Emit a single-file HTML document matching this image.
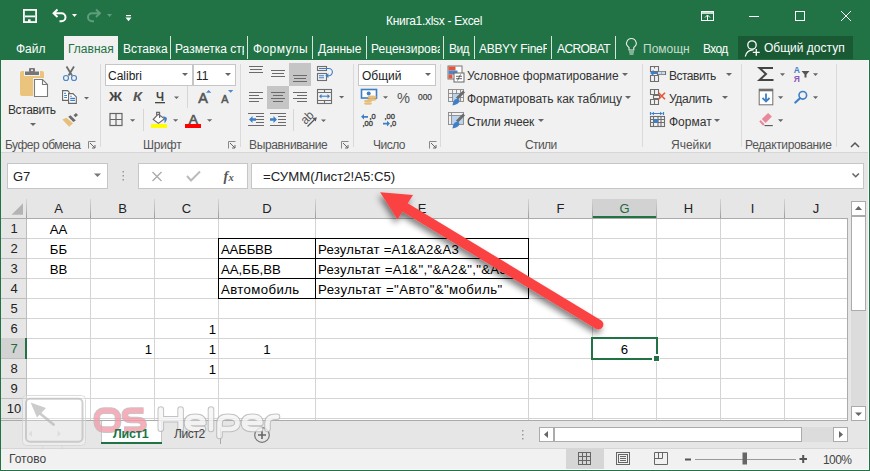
<!DOCTYPE html>
<html><head><meta charset="utf-8">
<style>
*{margin:0;padding:0;box-sizing:border-box}
html,body{width:870px;height:471px;overflow:hidden}
body{position:relative;background:#217346;font-family:"Liberation Sans",sans-serif;color:#262626}
.a{position:absolute}
.t{position:absolute;white-space:nowrap;line-height:1}
.w{color:#fff}
.sep{position:absolute;width:1px;background:#d5e6dc}
.gsep{position:absolute;width:1px;background:#dadada}
.rl{font-size:12px;color:#555}
.bx{position:absolute;background:#fff;border:1px solid #c6c6c6}
.dd{position:absolute;width:0;height:0;border-left:3px solid transparent;border-right:3px solid transparent;border-top:3px solid #666}
.col{position:absolute;top:199px;height:19px;font-size:13px;color:#222;text-align:center;line-height:19px}
.vl{position:absolute;width:1px;background:#d4d4d4}
.hl{position:absolute;height:1px;background:#d4d4d4}
.rh{position:absolute;left:1px;width:26px;height:20px;font-size:13px;color:#222;text-align:center;line-height:20px}
.cell{position:absolute;font-size:13.2px;color:#000;line-height:20px;white-space:nowrap;margin-top:2px}
</style></head><body>

<!-- title bar -->
<div class="t w" style="left:386px;top:15px;font-size:12px;letter-spacing:-0.3px">Книга1.xlsx - Excel</div>

<!-- tabs -->
<div class="a" style="left:64px;top:36px;width:54px;height:24px;background:#f1f1f1"></div>
<div class="t w" style="left:16px;top:42.5px;font-size:12px">Файл</div>
<div class="t" style="left:68px;top:42.5px;font-size:12px;color:#217346">Главная</div>
<div class="t w" style="left:123px;top:42.5px;font-size:12px">Вставка</div>
<div class="sep" style="left:170px;top:36px;height:23px"></div>
<div class="t w" style="left:175px;top:42.5px;font-size:12px;width:69px;overflow:hidden">Разметка страницы</div>
<div class="sep" style="left:247px;top:36px;height:23px"></div>
<div class="t w" style="left:253px;top:42.5px;font-size:12px;letter-spacing:0.4px">Формулы</div>
<div class="sep" style="left:312px;top:36px;height:23px"></div>
<div class="t w" style="left:318px;top:42.5px;font-size:12px">Данные</div>
<div class="sep" style="left:366px;top:36px;height:23px"></div>
<div class="t w" style="left:371px;top:42.5px;font-size:12px;width:69px;overflow:hidden">Рецензирование</div>
<div class="sep" style="left:443px;top:36px;height:23px"></div>
<div class="t w" style="left:449px;top:42.5px;font-size:12px;letter-spacing:-0.6px">Вид</div>
<div class="sep" style="left:474px;top:36px;height:23px"></div>
<div class="t w" style="left:479px;top:42.5px;font-size:12px;width:68px;overflow:hidden;letter-spacing:-0.3px">ABBYY FineReader</div>
<div class="sep" style="left:551px;top:36px;height:23px"></div>
<div class="t w" style="left:557px;top:42.5px;font-size:12px;letter-spacing:-0.6px">ACROBAT</div>
<div class="sep" style="left:615px;top:36px;height:23px"></div>
<div class="t" style="left:643px;top:42.5px;font-size:12px;color:#c8dccf;width:47px;overflow:hidden">Помощник</div>
<div class="t w" style="left:703px;top:42.5px;font-size:12px;letter-spacing:-0.6px">Вход</div>
<div class="a" style="left:738px;top:36px;width:115px;height:23px;background:#195a35"></div>
<div class="t w" style="left:764px;top:41.5px;font-size:12px">Общий доступ</div>

<!-- ribbon -->
<div class="a" style="left:1px;top:60px;width:868px;height:93px;background:#f1f1f1;border-bottom:1px solid #d6d6d6"></div>

<!-- ribbon group separators -->
<div class="gsep" style="left:100px;top:64px;height:83px"></div>
<div class="gsep" style="left:240px;top:64px;height:83px"></div>
<div class="gsep" style="left:353px;top:64px;height:83px"></div>
<div class="gsep" style="left:440px;top:64px;height:83px"></div>
<div class="gsep" style="left:642px;top:64px;height:83px"></div>
<div class="gsep" style="left:741px;top:64px;height:83px"></div>
<div class="gsep" style="left:836px;top:64px;height:83px"></div>
<!-- group labels -->
<div class="t rl" style="left:5px;top:139px;letter-spacing:-0.5px">Буфер обмена</div>
<div class="t rl" style="left:143px;top:139px;letter-spacing:-0.2px">Шрифт</div>
<div class="t rl" style="left:249px;top:139px;letter-spacing:-0.35px">Выравнивание</div>
<div class="t rl" style="left:373px;top:139px;letter-spacing:-0.5px">Число</div>
<div class="t rl" style="left:525px;top:139px;letter-spacing:-0.6px">Стили</div>
<div class="t rl" style="left:671px;top:139px">Ячейки</div>
<div class="t rl" style="left:745px;top:139px;letter-spacing:-0.35px">Редактирование</div>
<!-- launchers -->
<svg class="a" style="left:88px;top:141px" width="8" height="8"><path d="M0.5 7.5V0.5H7.5" stroke="#888" fill="none"/><path d="M2 2L7 7M7 4V7H4" stroke="#666" fill="none"/></svg>
<svg class="a" style="left:228px;top:141px" width="8" height="8"><path d="M0.5 7.5V0.5H7.5" stroke="#888" fill="none"/><path d="M2 2L7 7M7 4V7H4" stroke="#666" fill="none"/></svg>
<svg class="a" style="left:341px;top:141px" width="8" height="8"><path d="M0.5 7.5V0.5H7.5" stroke="#888" fill="none"/><path d="M2 2L7 7M7 4V7H4" stroke="#666" fill="none"/></svg>
<svg class="a" style="left:429px;top:141px" width="8" height="8"><path d="M0.5 7.5V0.5H7.5" stroke="#888" fill="none"/><path d="M2 2L7 7M7 4V7H4" stroke="#666" fill="none"/></svg>
<!-- collapse -->
<svg class="a" style="left:850px;top:141px" width="10" height="7"><path d="M1 6L5 2L9 6" stroke="#555" stroke-width="1.5" fill="none"/></svg>

<!-- clipboard group -->
<div class="t" style="left:8px;top:104px;font-size:12px;color:#333;letter-spacing:-0.4px">Вставить</div>
<div class="dd" style="left:30px;top:123px"></div>
<!-- font group boxes -->
<div class="bx" style="left:105px;top:64px;width:88px;height:22px;border-color:#c6c6c6"></div>
<div class="bx" style="left:193px;top:64px;width:43px;height:22px;border-color:#c6c6c6"></div>
<div class="t" style="left:108px;top:70px;font-size:12px;color:#222">Calibri</div>
<div class="t" style="left:196px;top:70px;font-size:12px;color:#222">11</div>
<div class="dd" style="left:182px;top:73px"></div>
<div class="dd" style="left:225px;top:73px"></div>
<!-- number format box -->
<div class="bx" style="left:358px;top:64px;width:78px;height:22px"></div>
<div class="t" style="left:362px;top:70px;font-size:12px;color:#222">Общий</div>
<div class="dd" style="left:425px;top:73px"></div>
<!-- styles group -->
<div class="t" style="left:467px;top:70px;font-size:12px;color:#333;letter-spacing:-0.05px">Условное форматирование</div>
<div class="dd" style="left:622px;top:73px"></div>
<div class="t" style="left:467px;top:93px;font-size:12px;color:#333;letter-spacing:-0.05px">Форматировать как таблицу</div>
<div class="dd" style="left:625px;top:96px"></div>
<div class="t" style="left:467px;top:116px;font-size:12px;color:#333;letter-spacing:-0.2px">Стили ячеек</div>
<div class="dd" style="left:538px;top:119px"></div>
<!-- cells group -->
<div class="t" style="left:669px;top:70px;font-size:12px;color:#333;letter-spacing:-0.5px">Вставить</div>
<div class="dd" style="left:726px;top:73px"></div>
<div class="t" style="left:669px;top:93px;font-size:12px;color:#333;letter-spacing:-0.4px">Удалить</div>
<div class="dd" style="left:722px;top:96px"></div>
<div class="t" style="left:669px;top:116px;font-size:12px;color:#333">Формат</div>
<div class="dd" style="left:714px;top:119px"></div>

<!-- formula area -->
<div class="a" style="left:1px;top:153px;width:868px;height:317px;background:#e6e6e6"></div>
<div class="bx" style="left:7px;top:163px;width:101px;height:26px"></div>
<div class="t" style="left:13px;top:170px;font-size:13px;color:#222">G7</div>
<div class="bx" style="left:138px;top:163px;width:110px;height:26px"></div>
<div class="bx" style="left:251px;top:163px;width:613px;height:26px"></div>
<div class="t" style="left:263px;top:170px;font-size:13.2px;color:#222">=СУММ(Лист2!A5:C5)</div>
<svg class="a" style="left:0;top:0" width="870" height="471" viewBox="0 0 870 471">
<!-- ===== QAT ===== -->
<g fill="none" stroke="#fff" stroke-width="1.8">
  <rect x="23.9" y="9.9" width="12.2" height="12.2"/>
  <path d="M25 16.4H35"/>
</g>
<rect x="28" y="19.3" width="2.6" height="3" fill="#fff"/>
<path d="M54 13.3H61.5A4 4 0 0 1 61.5 21.3H59.5" fill="none" stroke="#fff" stroke-width="2"/>
<path d="M57.5 9.6L53.6 13.3L57.5 17" fill="none" stroke="#fff" stroke-width="2"/>
<path d="M72 14H77L74.5 17Z" fill="#fff"/>
<path d="M99.5 13.3H92A4 4 0 0 0 92 21.3H94" fill="none" stroke="#5f9e7c" stroke-width="2"/>
<path d="M96 9.6L99.9 13.3L96 17" fill="none" stroke="#5f9e7c" stroke-width="2"/>
<path d="M107 14H112L109.5 17Z" fill="#5f9e7c"/>
<rect x="126" y="15" width="5" height="1.2" fill="#fff"/>
<path d="M125.5 17.5H131.5L128.5 21.3Z" fill="#fff"/>
<!-- window controls -->
<g fill="none" stroke="#fff" stroke-width="1">
  <rect x="701.5" y="11.5" width="12" height="9"/>
  <path d="M701 13H714" stroke-width="1.5"/>
  <path d="M707.5 20V15.5M705 17.5L707.5 15L710 17.5"/>
  <path d="M749 16.5H759"/>
  <rect x="795.5" y="11.5" width="9" height="9"/>
  <path d="M841 11L851 21M851 11L841 21"/>
</g>
<!-- lightbulb -->
<g fill="none" stroke="#e6efe9" stroke-width="1.1">
  <path d="M629 50V47.5C626.5 45.5 626.3 43 626.8 42A4.8 4.8 0 0 1 636 42C636.5 43 636.3 45.5 633.8 47.5V50Z"/>
  <path d="M629 52H634M629.5 54H633.5"/>
</g>
<!-- share person -->
<g fill="none" stroke="#fff" stroke-width="1.3">
  <circle cx="752" cy="45" r="4.2"/>
  <path d="M745.3 56.5A7.8 7.8 0 0 1 753.5 49.8"/>
  <path d="M752.8 52.4H759.7M756.3 49V55.8"/>
</g>

<!-- ===== Clipboard group ===== -->
<rect x="20" y="71" width="24" height="25" rx="2" fill="#eac47d"/>
<rect x="24" y="70" width="16" height="6" fill="#f1f1f1"/>
<path d="M25 71.5H39V75H25Z" fill="#767676"/>
<rect x="29" y="68" width="6" height="4" rx="1" fill="#767676"/>
<circle cx="32" cy="70.2" r="1" fill="#f1f1f1"/>
<rect x="33" y="78" width="16" height="20" fill="#f1f1f1"/>
<path d="M34.5 79.5H42.5L47.5 84.5V96.5H34.5Z" fill="#fff" stroke="#7a7a7a" stroke-width="1.1"/>
<path d="M42.5 79.5V84.5H47.5" fill="none" stroke="#7a7a7a" stroke-width="1.1"/>
<!-- scissors -->
<path d="M66.5 66.5L72 75.5M74 66.5L68.5 75.5" stroke="#6b6b6b" stroke-width="1.8" fill="none"/>
<circle cx="66" cy="78" r="2.5" fill="none" stroke="#4a86c8" stroke-width="1.2"/>
<circle cx="74" cy="78" r="2.5" fill="none" stroke="#4a86c8" stroke-width="1.2"/>
<!-- copy -->
<path d="M62.6 90.6H67.5L69.2 92.3V100.4H62.6Z" fill="#fff" stroke="#666" stroke-width="1.1"/>
<path d="M64.2 93.4H65.8M64.2 95.5H67M64.2 97.5H67" stroke="#3f7fc6" stroke-width="1.1"/>
<path d="M68.6 93.6H73L76.3 96.9V103.4H68.6Z" fill="#fff" stroke="#666" stroke-width="1.1"/>
<path d="M70.2 96.3H71.8M70.2 98.4H75M70.2 100.4H75" stroke="#3f7fc6" stroke-width="1.1"/>
<path d="M84 97H89L86.5 99.5Z" fill="#666"/>
<!-- format painter -->
<path d="M62.3 119.4L66.5 117.7L73 123.2L69.2 126.7Z" fill="#e8be7a"/>
<path d="M68.2 116.8L70.5 115.2L75.8 120.5L73.3 122Z" fill="#6b6b6b"/>
<path d="M73.5 115.2L76 113.1L78 115L75.5 117.3Z" fill="#6b6b6b"/>

<!-- ===== Font group ===== -->
<text x="109" y="101.3" font-family="Liberation Sans" font-weight="bold" font-size="13" fill="#444" textLength="13" lengthAdjust="spacingAndGlyphs">Ж</text>
<text x="133" y="101.3" font-family="Liberation Sans" font-weight="bold" font-style="italic" font-size="13" fill="#555" textLength="9" lengthAdjust="spacingAndGlyphs">К</text>
<text x="156" y="101.3" font-family="Liberation Sans" font-weight="bold" font-size="13" fill="#444" textLength="8" lengthAdjust="spacingAndGlyphs">Ч</text>
<rect x="155" y="102" width="10" height="1.3" fill="#444"/>
<path d="M174 96.5H179L176.5 99Z" fill="#666"/>
<rect x="187" y="86" width="1" height="22" fill="#d6d6d6"/>
<text x="198.2" y="102.6" font-family="Liberation Sans" font-size="14" fill="#555" stroke="#555" stroke-width="0.6" textLength="9.6" lengthAdjust="spacingAndGlyphs">A</text>
<path d="M206 92.8H211.3L208.65 90Z" fill="#4a86c8"/>
<text x="221.2" y="102.6" font-family="Liberation Sans" font-size="10.5" fill="#555" stroke="#555" stroke-width="0.5" textLength="7.2" lengthAdjust="spacingAndGlyphs">A</text>
<path d="M228 90H233.3L230.65 92.8Z" fill="#4a86c8"/>
<!-- borders -->
<g fill="none" stroke="#666" stroke-width="1.2">
<rect x="110" y="113.5" width="12" height="12"/>
<path d="M116 113.5V125.5M110 119.5H122"/>
</g>
<path d="M130 119.3H135.2L132.6 121.8Z" fill="#666"/>
<rect x="143" y="109" width="1" height="22" fill="#d6d6d6"/>
<!-- fill color -->
<path d="M153.2 119.5L158.2 114.2L164.6 118.8L158.4 123.4Z" fill="#fff" stroke="#666" stroke-width="1.1"/>
<path d="M156.6 115.5V112.4H159.6V118" fill="none" stroke="#666" stroke-width="1.1"/>
<path d="M163 116.2Q167.5 116.8 166.8 119.5Q166.2 121.5 164.6 123.3L164.4 119Z" fill="#3f7fc6"/>
<rect x="151" y="124" width="16" height="4" fill="#ffff00"/>
<path d="M173 119.3H178.2L175.6 121.8Z" fill="#666"/>
<!-- font color -->
<text x="188.8" y="123.6" font-family="Liberation Sans" font-size="13.5" fill="#555" stroke="#555" stroke-width="0.6" textLength="9.2" lengthAdjust="spacingAndGlyphs">A</text>
<rect x="185" y="124" width="16" height="4" fill="#ff0000"/>
<path d="M207 119.3H212.2L209.6 121.8Z" fill="#666"/>

<!-- ===== Alignment ===== -->
<rect x="289" y="63" width="22" height="23" fill="#c5c5c5"/>
<rect x="267" y="86" width="22" height="23" fill="#c5c5c5"/>
<g stroke="#6a6a6a" stroke-width="1.1">
<path d="M249 66.5H263M250 69.5H262M249 72.5H263"/>
<path d="M271 70.5H285M272 73.5H284M271 76.5H285"/>
<path d="M293 75.5H307M294 78.5H306M293 81.5H307"/>
<path d="M249 92.5H263M249 95.5H259M249 98.5H263M249 101.5H259"/>
<path d="M271 92.5H285M273 95.5H283M271 98.5H285M273 101.5H283"/>
<path d="M293 92.5H307M297 95.5H307M293 98.5H307M297 101.5H307"/>
<path d="M248 113.5H264M256 116.5H264M256 119.5H264M256 122.5H264M248 125.5H264"/>
<path d="M270 113.5H286M278 116.5H286M278 119.5H286M278 122.5H286M270 125.5H286"/>
</g>
<path d="M249 119.5L252.5 116V118.3H256V120.7H252.5V123Z" fill="#3f7fc6"/>
<path d="M277 119.5L273.5 116V118.3H270V120.7H273.5V123Z" fill="#3f7fc6"/>
<rect x="293" y="109" width="1" height="22" fill="#d6d6d6"/>
<!-- orientation -->
<text x="0" y="0" transform="translate(305.5,125) rotate(-45)" font-family="Liberation Sans" font-size="12.5" fill="#555" textLength="13" lengthAdjust="spacingAndGlyphs">ab</text>
<path d="M307.5 126.5L315 119" stroke="#555" stroke-width="1.2" fill="none"/>
<path d="M316.8 117.3L312.6 118.3L315.8 121.5Z" fill="#555"/>
<path d="M321 119.6H326L323.5 122Z" fill="#666"/>
<!-- wrap text -->
<g fill="none" stroke="#6e6e6e" stroke-width="1.1">
<rect x="317.5" y="66.5" width="9" height="4"/>
<rect x="317.5" y="73.5" width="9" height="7"/>
</g>
<g fill="none" stroke="#3f7fc6" stroke-width="1.1">
<path d="M319 68.5H328.8A3.6 3.6 0 0 1 328.8 75.7H328"/>
<path d="M319 75.8H324M319 77.8H324"/>
</g>
<path d="M325.2 75.7L328.4 73.3V78.1Z" fill="#3f7fc6"/>
<!-- merge -->
<g fill="none" stroke="#6e6e6e" stroke-width="1.1">
<rect x="317.5" y="89.5" width="14" height="14"/>
<path d="M317.5 92.5H331.5M317.5 100.5H331.5M324.5 89.5V92.5M324.5 100.5V103.5"/>
</g>
<path d="M320 96.2H329" stroke="#3f7fc6" stroke-width="1.1"/>
<path d="M319 96.2L321.5 94V98.4ZM330 96.2L327.5 94V98.4Z" fill="#3f7fc6"/>
<path d="M339 96H344.2L341.6 98.6Z" fill="#666"/>

<!-- ===== Number ===== -->
<rect x="361.5" y="89.5" width="15" height="8.5" fill="#fff" stroke="#3f7fc6" stroke-width="1.6"/>
<circle cx="368.7" cy="93.6" r="2" fill="#3f7fc6"/>
<g fill="#e8be7a">
<ellipse cx="372" cy="97" rx="4.5" ry="1.4"/>
<ellipse cx="372" cy="99.6" rx="4.5" ry="1.4"/>
<ellipse cx="368" cy="101" rx="4" ry="1.3"/>
<ellipse cx="368" cy="103.5" rx="4" ry="1.3"/>
</g>
<path d="M383 96.3H388L385.5 98.8Z" fill="#666"/>
<text x="397" y="103" font-family="Liberation Sans" font-size="14.5" fill="#555" textLength="13" lengthAdjust="spacingAndGlyphs">%</text>
<text x="418" y="99.8" font-family="Liberation Sans" font-size="9" fill="#444" stroke="#444" stroke-width="0.25" textLength="14" lengthAdjust="spacingAndGlyphs">000</text>
<text x="369.5" y="118.6" font-family="Liberation Sans" font-size="7.5" fill="#444" stroke="#444" stroke-width="0.35">,0</text>
<text x="362.5" y="125.7" font-family="Liberation Sans" font-size="7.5" fill="#444" stroke="#444" stroke-width="0.35">,00</text>
<path d="M361 116.8L364 114V115.9H368V117.7H364V119.6Z" fill="#3f7fc6"/>
<text x="384.5" y="118.6" font-family="Liberation Sans" font-size="7.5" fill="#444" stroke="#444" stroke-width="0.35">,00</text>
<text x="390" y="125.7" font-family="Liberation Sans" font-size="7.5" fill="#444" stroke="#444" stroke-width="0.35">,0</text>
<path d="M390 123.6L387 120.8V122.7H383V124.5H387V126.4Z" fill="#3f7fc6"/>

<!-- ===== Styles ===== -->
<!-- conditional formatting -->
<rect x="448" y="66" width="14" height="13" fill="#fff" stroke="#777" stroke-width="1"/>
<rect x="448.5" y="66.5" width="7" height="4" fill="#e4553b"/>
<rect x="448.5" y="70.5" width="9" height="4" fill="#4a86c8"/>
<rect x="448.5" y="74.5" width="4" height="4" fill="#e4553b"/>
<rect x="454" y="73" width="10" height="9" fill="#fff" stroke="#666" stroke-width="1"/>
<path d="M456 76.3H462M456 78.7H462M460.5 74.5L457.5 80.5" stroke="#444" stroke-width="0.8"/>
<!-- format as table -->
<g fill="none" stroke="#888" stroke-width="0.9">
<rect x="448.5" y="89.5" width="15" height="12"/>
<path d="M448.5 93.5H463.5M448.5 97.5H463.5M452.5 89.5V101.5M456.5 89.5V101.5M460.5 89.5V101.5"/>
</g>
<rect x="453" y="94" width="7" height="7" fill="#b9d3ee"/>
<path d="M464 91.5L457 98.5" stroke="#6b6b6b" stroke-width="2.8"/>
<path d="M452.5 105.5Q453 100 456 99Q459 98 459.5 101Q459 104 452.5 105.5Z" fill="#3f7fc6"/>
<!-- cell styles -->
<g fill="none" stroke="#888" stroke-width="0.9">
<rect x="448.5" y="112.5" width="15" height="12"/>
<path d="M448.5 115.5H463.5M451.5 112.5V124.5"/>
</g>
<rect x="452" y="116" width="11" height="8" fill="#b9d3ee"/>
<path d="M464 114.5L457 121.5" stroke="#6b6b6b" stroke-width="2.8"/>
<path d="M452.5 128.5Q453 123 456 122Q459 121 459.5 124Q459 127 452.5 128.5Z" fill="#3f7fc6"/>

<!-- ===== Cells ===== -->
<g fill="none" stroke="#6e6e6e" stroke-width="1.1">
<path d="M650.5 66.5H658.5V71.5H650.5Z"/>
<path d="M654.5 66.5V68.5"/>
<path d="M650.5 75.5H658.5V81.5H650.5ZM654.5 75.5V81.5"/>
<path d="M657.5 71.5H665.5V74.5H657.5ZM661.5 71.5V74.5"/>
</g>
<path d="M658.5 72.2H665M658.5 73.8H665" stroke="#b9d3ee" stroke-width="1"/>
<path d="M650 73L653.5 69.8V71.9H657.5V74.1H653.5V76.2Z" fill="#3f7fc6"/>
<g fill="none" stroke="#6e6e6e" stroke-width="1.1">
<path d="M650.5 89.5H658.5V94.5H650.5ZM654.5 89.5V94.5"/>
<path d="M653.5 95.5H659.5V98.5H653.5Z"/>
<path d="M650.5 99.5H658.5V104.5H650.5ZM654.5 99.5V104.5"/>
</g>
<path d="M658.5 92.8L665 99.3M665 92.8L658.5 99.3" stroke="#e4553b" stroke-width="1.6"/>
<g fill="none" stroke="#3f7fc6" stroke-width="1.2">
<path d="M650.5 112V115M663.5 112V115M651.5 113.5H662.5"/>
</g>
<path d="M651.5 113.5L654 111.8V115.2ZM662.5 113.5L660 111.8V115.2Z" fill="#3f7fc6"/>
<g fill="none" stroke="#6e6e6e" stroke-width="1.1">
<rect x="650.5" y="116.5" width="14" height="10"/>
<path d="M650.5 119.5H664.5M650.5 122.5H664.5M653.5 116.5V126.5M658 116.5V126.5M661 116.5V126.5"/>
</g>
<rect x="653.5" y="119.3" width="4.8" height="3.5" fill="#3f7fc6"/>

<!-- ===== Editing ===== -->
<path d="M773 68H759.5L766 74L759.5 80H773.5" fill="none" stroke="#444" stroke-width="2"/>
<path d="M780 73.3H785L782.5 76Z" fill="#666"/>
<text x="793.8" y="72.7" font-family="Liberation Sans" font-weight="bold" font-size="8.5" fill="#3f7fc6">A</text>
<text x="793.8" y="81.5" font-family="Liberation Sans" font-weight="bold" font-size="8.5" fill="#8b58b7">Я</text>
<path d="M801.5 71H809.5L806.5 74.5V77.5H804.5V74.5Z" fill="#555"/>
<path d="M813 73.3H818L815.5 76Z" fill="#666"/>
<rect x="759.2" y="89.2" width="13.6" height="15.6" fill="#fff" stroke="#6e6e6e" stroke-width="1"/>
<rect x="759" y="89" width="14" height="2.3" fill="#6e6e6e"/>
<path d="M766 93.5V101M762.5 98L766 101.5L769.5 98" fill="none" stroke="#3f7fc6" stroke-width="1.8"/>
<path d="M778 96.3H783.2L780.6 99Z" fill="#666"/>
<circle cx="802.8" cy="95.3" r="3.8" fill="none" stroke="#3f7fc6" stroke-width="1.6"/>
<path d="M800 98.2L795.3 102.5" stroke="#3f7fc6" stroke-width="2.2" stroke-linecap="round"/>
<path d="M813 96.3H818L815.5 99Z" fill="#666"/>
<path d="M761.8 119L768.1 113.1L771.9 116.6L765.6 123Z" fill="#e8899b"/>
<path d="M759.3 121.6L760.6 120L764.6 124.1L763 125.8Z" fill="#e8899b"/>
<path d="M764.5 125.6H772.8" stroke="#555" stroke-width="1.1"/>
<path d="M778 119.3H783.2L780.6 122Z" fill="#666"/>

<!-- ===== Formula bar ===== -->
<path d="M94 173.5H101L97.5 177Z" fill="#777"/>
<g fill="#999"><rect x="122.5" y="171" width="1.5" height="1.5"/><rect x="122.5" y="175" width="1.5" height="1.5"/><rect x="122.5" y="179" width="1.5" height="1.5"/></g>
<path d="M152.5 172L161.5 181M161.5 172L152.5 181" stroke="#aaa" stroke-width="1.3"/>
<path d="M187 176L191 180.5L200 171.5" fill="none" stroke="#bbb" stroke-width="2"/>
<text x="223.5" y="180.5" font-family="Liberation Serif" font-weight="bold" font-style="italic" font-size="14" fill="#555">f</text>
<text x="228.5" y="180.5" font-family="Liberation Serif" font-weight="bold" font-style="italic" font-size="10.5" fill="#555">x</text>
<path d="M852.5 173.5L855.7 176.7L858.9 173.5" fill="none" stroke="#666" stroke-width="1.6"/>
</svg>


<!-- grid -->
<div class="a" style="left:27px;top:218px;width:820px;height:202px;background:#fff"></div>

<div class="a" style="left:593px;top:199px;width:63px;height:19px;background:#d2d2d2"></div>
<div class="a" style="left:593px;top:216px;width:63px;height:2px;background:#217346"></div>
<div class="a" style="left:90px;top:199px;width:1px;height:19px;background:linear-gradient(#d4d4d4,#b8b8b8 60%,#9a9a9a)"></div>
<div class="col" style="left:27px;width:63px">A</div>
<div class="a" style="left:154px;top:199px;width:1px;height:19px;background:linear-gradient(#d4d4d4,#b8b8b8 60%,#9a9a9a)"></div>
<div class="col" style="left:91px;width:63px">B</div>
<div class="a" style="left:218px;top:199px;width:1px;height:19px;background:linear-gradient(#d4d4d4,#b8b8b8 60%,#9a9a9a)"></div>
<div class="col" style="left:155px;width:63px">C</div>
<div class="a" style="left:315px;top:199px;width:1px;height:19px;background:linear-gradient(#d4d4d4,#b8b8b8 60%,#9a9a9a)"></div>
<div class="col" style="left:219px;width:96px">D</div>
<div class="a" style="left:528px;top:199px;width:1px;height:19px;background:linear-gradient(#d4d4d4,#b8b8b8 60%,#9a9a9a)"></div>
<div class="col" style="left:316px;width:212px">E</div>
<div class="a" style="left:592px;top:199px;width:1px;height:19px;background:linear-gradient(#d4d4d4,#b8b8b8 60%,#9a9a9a)"></div>
<div class="col" style="left:529px;width:63px">F</div>
<div class="a" style="left:656px;top:199px;width:1px;height:19px;background:linear-gradient(#d4d4d4,#b8b8b8 60%,#9a9a9a)"></div>
<div class="col" style="left:593px;width:63px;color:#1d6b3f">G</div>
<div class="a" style="left:720px;top:199px;width:1px;height:19px;background:linear-gradient(#d4d4d4,#b8b8b8 60%,#9a9a9a)"></div>
<div class="col" style="left:657px;width:63px">H</div>
<div class="a" style="left:784px;top:199px;width:1px;height:19px;background:linear-gradient(#d4d4d4,#b8b8b8 60%,#9a9a9a)"></div>
<div class="col" style="left:721px;width:63px">I</div>
<div class="col" style="left:785px;width:62px">J</div>
<div class="a" style="left:26px;top:199px;width:1px;height:19px;background:linear-gradient(#d4d4d4,#b8b8b8 60%,#9a9a9a)"></div>
<div class="a" style="left:1px;top:218px;width:847px;height:1px;background:#ababab"></div>
<svg class="a" style="left:0;top:199px" width="26" height="19"><polygon points="11.5,15.7 23,4.3 23,15.7" fill="#b4b4b4"/></svg>
<div class="a" style="left:1px;top:238px;width:25px;height:1px;background:#bdbdbd"></div>
<div class="rh" style="top:219px">1</div>
<div class="a" style="left:1px;top:258px;width:25px;height:1px;background:#bdbdbd"></div>
<div class="rh" style="top:239px">2</div>
<div class="a" style="left:1px;top:278px;width:25px;height:1px;background:#bdbdbd"></div>
<div class="rh" style="top:259px">3</div>
<div class="a" style="left:1px;top:298px;width:25px;height:1px;background:#bdbdbd"></div>
<div class="rh" style="top:279px">4</div>
<div class="a" style="left:1px;top:318px;width:25px;height:1px;background:#bdbdbd"></div>
<div class="rh" style="top:299px">5</div>
<div class="a" style="left:1px;top:338px;width:25px;height:1px;background:#bdbdbd"></div>
<div class="rh" style="top:319px">6</div>
<div class="a" style="left:1px;top:338px;width:25px;height:20px;background:#d2d2d2"></div>
<div class="a" style="left:1px;top:358px;width:25px;height:1px;background:#bdbdbd"></div>
<div class="rh" style="top:339px;color:#1d6b3f">7</div>
<div class="a" style="left:1px;top:378px;width:25px;height:1px;background:#bdbdbd"></div>
<div class="rh" style="top:359px">8</div>
<div class="a" style="left:1px;top:398px;width:25px;height:1px;background:#bdbdbd"></div>
<div class="rh" style="top:379px">9</div>
<div class="a" style="left:1px;top:418px;width:25px;height:1px;background:#bdbdbd"></div>
<div class="rh" style="top:399px">10</div>
<div class="a" style="left:26px;top:219px;width:1px;height:200px;background:#bdbdbd"></div>
<div class="a" style="left:25px;top:338px;width:2px;height:21px;background:#217346"></div>
<div class="vl" style="left:90px;top:219px;height:201px"></div>
<div class="vl" style="left:154px;top:219px;height:201px"></div>
<div class="vl" style="left:218px;top:219px;height:201px"></div>
<div class="vl" style="left:315px;top:219px;height:201px"></div>
<div class="vl" style="left:528px;top:219px;height:201px"></div>
<div class="vl" style="left:592px;top:219px;height:201px"></div>
<div class="vl" style="left:656px;top:219px;height:201px"></div>
<div class="vl" style="left:720px;top:219px;height:201px"></div>
<div class="vl" style="left:784px;top:219px;height:201px"></div>
<div class="hl" style="left:27px;top:238px;width:820px"></div>
<div class="hl" style="left:27px;top:258px;width:820px"></div>
<div class="hl" style="left:27px;top:278px;width:820px"></div>
<div class="hl" style="left:27px;top:298px;width:820px"></div>
<div class="hl" style="left:27px;top:318px;width:820px"></div>
<div class="hl" style="left:27px;top:338px;width:820px"></div>
<div class="hl" style="left:27px;top:358px;width:820px"></div>
<div class="hl" style="left:27px;top:378px;width:820px"></div>
<div class="hl" style="left:27px;top:398px;width:820px"></div>
<div class="hl" style="left:27px;top:418px;width:820px"></div>

<div class="cell" style="left:27px;top:218px;width:63px;text-align:center">АА</div>
<div class="cell" style="left:27px;top:238px;width:63px;text-align:center">ББ</div>
<div class="cell" style="left:27px;top:258px;width:63px;text-align:center">ВВ</div>
<div class="cell" style="left:221px;top:238px;letter-spacing:-0.2px">ААББВВ</div>
<div class="cell" style="left:221px;top:258px">АА,ББ,ВВ</div>
<div class="cell" style="left:221px;top:278px;letter-spacing:0.4px">Автомобиль</div>
<div class="cell" style="left:318px;top:238px;letter-spacing:0.2px">Результат =A1&amp;A2&amp;A3</div>
<div class="cell" style="left:318px;top:258px;letter-spacing:0.3px">Результат =A1&amp;","&amp;A2&amp;","&amp;A3</div>
<div class="cell" style="left:318px;top:278px;letter-spacing:0.43px">Результат ="Авто"&amp;"мобиль"</div>
<div class="cell" style="left:155px;top:318px;width:61px;text-align:right">1</div>
<div class="cell" style="left:91px;top:338px;width:61px;text-align:right">1</div>
<div class="cell" style="left:155px;top:338px;width:61px;text-align:right">1</div>
<div class="cell" style="left:219px;top:338px;width:96px;text-align:center">1</div>
<div class="cell" style="left:155px;top:358px;width:61px;text-align:right">1</div>
<div class="cell" style="left:593px;top:338px;width:63px;text-align:center">6</div>
<!-- table borders -->
<div class="a" style="left:218px;top:238px;width:311px;height:61px;border:1px solid #000"></div>
<div class="a" style="left:315px;top:238px;width:1px;height:61px;background:#000"></div>
<div class="a" style="left:218px;top:258px;width:311px;height:1px;background:#000"></div>
<div class="a" style="left:218px;top:278px;width:311px;height:1px;background:#000"></div>
<!-- selection -->
<div class="a" style="left:591px;top:337px;width:67px;height:23px;border:2px solid #217346"></div>
<div class="a" style="left:652px;top:354px;width:8px;height:8px;background:#fff"></div>
<div class="a" style="left:654px;top:356px;width:5px;height:5px;background:#217346"></div>


<!-- sheet tabs bar -->
<!-- status bar -->
<div class="a" style="left:1px;top:448px;width:868px;height:22px;background:#f1f1f1;border-top:1px solid #d6d6d6"></div>
<div class="t" style="left:9px;top:453px;font-size:12px;color:#444">Готово</div>
<!-- grid right/bottom border -->
<div class="a" style="left:847px;top:218px;width:1px;height:203px;background:#ababab"></div>
<div class="a" style="left:1px;top:420px;width:847px;height:1px;background:#ababab"></div>
<!-- v scrollbar -->
<div class="a" style="left:851px;top:201px;width:15px;height:220px;background:#dcdcdc"></div>
<div class="a" style="left:851px;top:201px;width:15px;height:15px;background:#fff;border:1px solid #ababab"></div>
<svg class="a" style="left:851px;top:201px" width="15" height="15"><path d="M4 9H11L7.5 5Z" fill="#666"/></svg>
<div class="a" style="left:851px;top:215px;width:15px;height:96px;background:#fff;border:1px solid #ababab;border-top:2px solid #ababab"></div>
<div class="a" style="left:851px;top:406px;width:15px;height:15px;background:#fff;border:1px solid #ababab"></div>
<svg class="a" style="left:851px;top:406px" width="15" height="15"><path d="M4 6.5H11L7.5 10Z" fill="#666"/></svg>
<!-- sheet tabs -->
<div class="a" style="left:101px;top:421px;width:61px;height:23px;background:#fff;border-left:1px solid #c6c6c6;border-right:1px solid #c6c6c6"></div>
<div class="a" style="left:101px;top:442px;width:61px;height:2px;background:#217346"></div>
<div class="a" style="left:220px;top:428px;width:1px;height:16px;background:#a8a8a8"></div>
<svg class="a" style="left:253px;top:426px" width="18" height="18"><circle cx="9" cy="9" r="7.3" fill="none" stroke="#777" stroke-width="1.2"/><path d="M5 9H13M9 5V13" stroke="#666" stroke-width="1.6"/></svg>
<svg class="a" style="left:521px;top:429px" width="4" height="11"><rect x="1" y="1" width="1.5" height="1.5" fill="#999"/><rect x="1" y="5" width="1.5" height="1.5" fill="#999"/><rect x="1" y="9" width="1.5" height="1.5" fill="#999"/></svg>
<!-- h scrollbar -->
<div class="a" style="left:539px;top:427px;width:309px;height:15px;background:#dcdcdc"></div>
<div class="a" style="left:539px;top:427px;width:15px;height:15px;background:#fff;border:1px solid #ababab"></div>
<svg class="a" style="left:539px;top:427px" width="15" height="15"><path d="M9 4V11L5 7.5Z" fill="#666"/></svg>
<div class="a" style="left:553px;top:427px;width:249px;height:15px;background:#fff;border:1px solid #ababab;border-left:2px solid #ababab"></div>
<div class="a" style="left:833px;top:427px;width:15px;height:15px;background:#fff;border:1px solid #ababab"></div>
<svg class="a" style="left:833px;top:427px" width="15" height="15"><path d="M6 4V11L10 7.5Z" fill="#666"/></svg>
<!-- status bar -->
<div class="a" style="left:566px;top:449px;width:38px;height:20px;background:#d6d6d6"></div>
<svg class="a" style="left:0;top:440px" width="870" height="31">
<g fill="none" stroke="#666" stroke-width="1">
<rect x="578.5" y="12.5" width="12" height="12"/>
<path d="M582.5 12.5V24.5M586.5 12.5V24.5M578.5 16.5H590.5M578.5 20.5H590.5"/>
<rect x="616.5" y="12.5" width="13" height="12"/>
<rect x="618.5" y="14.5" width="9" height="8"/>
<path d="M620 16.5H626M620 18.5H626M620 20.5H626"/>
<path d="M654.5 12.5H667.5V24.5H654.5ZM658.5 12.5V18.5M662.5 12.5V18.5M654.5 18.5H662.5"/>
</g>
<path d="M685 19.5H691" stroke="#555" stroke-width="2"/>
<path d="M695 19.5H796" stroke="#999" stroke-width="1"/>
<rect x="742.5" y="12.5" width="4.5" height="12" fill="#666"/>
<path d="M799.5 19H807M803.2 15V23" stroke="#555" stroke-width="2"/>
</svg>
<div class="t" style="left:823px;top:454px;font-size:12px;color:#444;letter-spacing:-0.6px">100%</div>


<svg class="a" style="left:0;top:0" width="870" height="471" viewBox="0 0 870 471">
<g opacity="0.8">
<!-- monitor icon -->
<rect x="22.5" y="395.5" width="63" height="50" rx="4" fill="rgba(255,255,255,0.35)" stroke="#d4d4d4" stroke-width="1"/>
<rect x="26" y="398.8" width="56.5" height="43" rx="4" fill="none" stroke="#c4c4c4" stroke-width="2"/>
<path d="M42.5 449.5V447.5Q42.5 445.5 44.5 445.5H60.5Q62.5 445.5 62.5 447.5V449.5" fill="none" stroke="#d4d4d4" stroke-width="1"/>
<path d="M37 411L53.5 424.5" stroke="#c0c0c0" stroke-width="2.8" stroke-linecap="round"/>
<path d="M30.6 402.5L46 408L37 417.5Z" fill="#c0c0c0"/>
<path d="M32 430.5V437L28.5 433.7Z" fill="#dcdcdc"/>
<path d="M57.5 430.5V437L61 433.7Z" fill="#dcdcdc"/>
<!-- OS -->
<g fill="none" stroke-linecap="butt" stroke-linejoin="round">
<g stroke="#b8b8b8" stroke-width="6.6">
<rect x="96.8" y="410.6" width="21.2" height="19" rx="7"/>
<path d="M143.5 410.6H131Q124.8 410.6 124.8 415.3Q124.8 420 131 420H137.5Q143.7 420 143.7 424.8Q143.7 429.6 137.5 429.6H124"/>
</g>
<g stroke="#f49aab" stroke-width="4.8">
<rect x="96.8" y="410.6" width="21.2" height="19" rx="7"/>
<path d="M143.5 410.6H131Q124.8 410.6 124.8 415.3Q124.8 420 131 420H137.5Q143.7 420 143.7 424.8Q143.7 429.6 137.5 429.6H124"/>
</g>
</g>
<!-- Helper -->
<g fill="none" stroke-linecap="round" stroke-linejoin="round">
<g stroke="#b4b4b4" stroke-width="6.6">
<path d="M160.8 409.6V428.8M180.6 409.6V428.8M160.8 419.2H180.6"/>
<path d="M187 423H203.5Q203.5 416.8 195.3 416.8Q187 416.8 187 423Q187 429 195.3 429H203"/>
<path d="M211 409.6V429"/>
<path d="M219.5 436V423Q219.5 416.8 228 416.8Q237.5 416.8 237.5 423Q237.5 429 228 429H220"/>
<path d="M244 423H260.5Q260.5 416.8 252.3 416.8Q244 416.8 244 423Q244 429 252.3 429H260"/>
<path d="M267.5 429V423Q267.5 416.8 276 416.8H277"/>
</g>
<g stroke="#f6f6f6" stroke-width="4.6">
<path d="M160.8 409.6V428.8M180.6 409.6V428.8M160.8 419.2H180.6"/>
<path d="M187 423H203.5Q203.5 416.8 195.3 416.8Q187 416.8 187 423Q187 429 195.3 429H203"/>
<path d="M211 409.6V429"/>
<path d="M219.5 436V423Q219.5 416.8 228 416.8Q237.5 416.8 237.5 423Q237.5 429 228 429H220"/>
<path d="M244 423H260.5Q260.5 416.8 252.3 416.8Q244 416.8 244 423Q244 429 252.3 429H260"/>
<path d="M267.5 429V423Q267.5 416.8 276 416.8H277"/>
</g>
</g>
</g>
</svg>

<div class="t" style="left:113px;top:428px;font-size:12.5px;font-weight:bold;color:#217346;letter-spacing:-0.2px">Лист1</div>
<div class="t" style="left:174px;top:428px;font-size:12px;color:#444;letter-spacing:-0.4px">Лист2</div>
<div class="a" style="left:868px;top:60px;width:1px;height:410px;background:#fbfbfb"></div>
<div class="a" style="left:1px;top:469px;width:868px;height:1px;background:#fbfbfb"></div>
<svg class="a" style="left:0;top:0" width="870" height="471" viewBox="0 0 870 471">
<defs><filter id="sh" x="-20%" y="-20%" width="140%" height="140%"><feGaussianBlur in="SourceAlpha" stdDeviation="3"/><feOffset dx="-2" dy="4"/><feComponentTransfer><feFuncA type="linear" slope="0.5"/></feComponentTransfer><feMerge><feMergeNode/><feMergeNode in="SourceGraphic"/></feMerge></filter></defs>
<g filter="url(#sh)">
<path d="M406 208L598.4 324.5" stroke="#fb4343" stroke-width="10" stroke-linecap="round"/>
<path d="M380.1 192.2L413 195.1L397.5 219.5Z" fill="#fb4343"/>
</g>
</svg>

</body></html>
